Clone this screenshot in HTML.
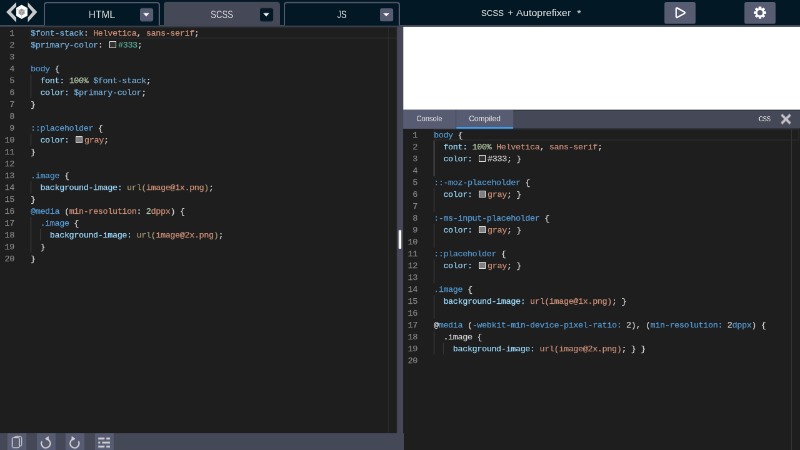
<!DOCTYPE html>
<html lang="en">
<head>
<meta charset="utf-8">
<title>SCSS + Autoprefixer</title>
<style>
*{box-sizing:border-box;margin:0;padding:0}
html,body{width:800px;height:450px;overflow:hidden;background:#03192a}
body{font-family:"Liberation Sans",sans-serif}
#app{position:absolute;left:0;top:0;width:1280px;height:720px;transform:scale(.625);transform-origin:0 0;background:#021925;overflow:hidden}
#hdr{position:absolute;left:0;top:0;width:1280px;height:43px;background:#021925;border-bottom:3px solid #454857}
.tab{position:absolute;top:3px;height:38px;width:186px;border:2px solid #565a70;border-bottom:none;border-radius:5px 5px 0 0;background:#021925;color:#e4e4e4;font-size:16px;line-height:34px;text-align:center}
.tab.act{background:#454857;border-color:#454857}
.tab span{will-change:transform;position:absolute;left:0;right:0;top:2px;text-align:center;font-size:15.9px;color:#dedede;transform:scaleX(0.975)}
.dd{position:absolute;right:9.3px;top:8px;width:21px;height:20.5px;border-radius:3px;background:#585c73}
.tab.act .dd{background:#021925}
.dd:after{content:"";position:absolute;left:5.7px;top:7.7px;border:5.3px solid transparent;border-top:5.6px solid #fff;border-bottom:none}
#title span{position:absolute;top:0;height:40px;line-height:41px;color:#e2e2e2;font-size:15.9px;transform-origin:0 50%;white-space:pre}
.hb{position:absolute;top:3px;width:50px;height:35px;border-radius:3px;background:#585c73}
.ed{position:absolute;background:#1e1e1e;overflow:hidden;font-family:"Liberation Mono",monospace;font-size:13.5px;color:#d4d4d4;letter-spacing:-0.4px;-webkit-text-stroke:0.25px}
.ln{position:relative;height:19px;line-height:19px;white-space:pre}
.ln b{position:absolute;left:0;top:0.6px;will-change:transform;width:23px;text-align:right;font-weight:normal;color:#858585}
.ln:first-child b{color:#c6c6c6}
.ln .tx{position:absolute;left:49px;top:0.6px;will-change:transform}
.cur{position:absolute;left:49px;top:0;height:19px;border:2px solid #282828}
.ov{position:absolute;top:0;left:621px;width:20px;bottom:0;border-left:1px solid #333}
.g{position:absolute;width:1px;background:#404040}.ga{background:#707070}
.cb{display:inline-block;width:11.2px;height:11.2px;border:1.4px solid #eee;margin:1.4px 2.8px 0 2.8px;vertical-align:-1px}
.v{color:#74b0df}.s{color:#ce9178}.d{color:#d4d4d4}.t{color:#569cd6}.a{color:#9cdcfe}.n{color:#b5cea8}.h{color:#5bb498}.m{color:#a79873}.k{color:#569cd6}
#gut{position:absolute;left:635px;top:43px;width:10px;height:677px;background:#454857}
#gut i{position:absolute;left:3px;top:325px;width:4px;height:30px;background:#fff;border-radius:1px}
#prev{position:absolute;left:645px;top:43px;width:635px;height:133px;background:#fff}
#rtabs{position:absolute;left:645px;top:176px;width:635px;height:30px;background:#454857;color:#e4e4e4;font-size:12px}
.rt{will-change:transform;position:absolute;top:0;height:30px;line-height:29px;text-align:center;background:#585c73}
#bot{position:absolute;left:0;top:692.6px;width:645px;height:28px;background:#454857}
.bb{position:absolute;top:0;width:30px;height:28px;background:#585c73}
svg{position:absolute;overflow:visible}
</style>
</head>
<body>
<div id="app">
 <div id="hdr">
  <svg id="logo" style="left:0;top:0" width="70" height="40" viewBox="0 0 70 40">
   <path d="M10 19.2 L25.8 3.5 L25.8 10.5 L17.5 19.2 L25.8 28 L25.8 35.5 Z" fill="#c9c9c9"/>
   <path d="M59.5 19.2 L44.5 3.5 L44.5 10.5 L52.2 19.2 L44.5 28 L44.5 35.5 Z" fill="#c9c9c9"/>
   <path d="M34.6 7.5 L44 12.8 L44 25.2 L34.6 30.5 L25.8 25.2 L25.8 12.8 Z" fill="#fff"/>
   <path d="M34.6 13.6 L39.4 16.3 L39.4 22 L34.6 24.9 L29.8 22 L29.8 16.3 Z" fill="#9c9c9c"/>
   <path d="M34.6 19.2 L39.4 16.3 M34.6 19.2 L29.8 16.3 M34.6 19.2 L34.6 29.5" stroke="#c4c4c4" stroke-width="1" fill="none"/>
   <path d="M27 14.9 L29.2 14.9 M40 14.9 L42.2 14.9" stroke="#b4b4b4" stroke-width="1" fill="none"/>
  </svg>
  <div class="tab" style="left:70px"><span>HTML</span><i class="dd"></i></div>
  <div class="tab act" style="left:262px"><span style="transform:scaleX(0.828)">SCSS</span><i class="dd"></i></div>
  <div class="tab" style="left:454px"><span style="transform:scaleX(0.790)">JS</span><i class="dd"></i></div>
  <div id="title"><span style="left:770.3px;transform:scaleX(0.828)">SCSS</span> <span style="left:811.5px;transform:scaleX(0.974)">+</span> <span style="left:826px;transform:scaleX(1.019)">Autoprefixer</span> <span style="left:922.5px;transform:scaleX(1.072)">*</span></div>
  <div class="hb" style="left:1063px">
   <svg style="left:0;top:0" width="50" height="35"><path d="M20 10.8 L31.9 17.25 L20 23.7 Z" fill="#fff" stroke="#fff" stroke-width="4.6" stroke-linejoin="round"/><path d="M20 10.8 L31.9 17.25 L20 23.7 Z" fill="#585c73"/></svg>
  </div>
  <div class="hb" style="left:1191px">
   <svg style="left:0;top:0" width="50" height="35" viewBox="0 0 50 35">
    <g transform="translate(25 17.2)" fill="#fff">
     <g id="teeth">
      <rect x="-2.1" y="-9.7" width="4.2" height="19.4" rx="1"/>
      <rect x="-2.1" y="-9.7" width="4.2" height="19.4" rx="1" transform="rotate(45)"/>
      <rect x="-2.1" y="-9.7" width="4.2" height="19.4" rx="1" transform="rotate(90)"/>
      <rect x="-2.1" y="-9.7" width="4.2" height="19.4" rx="1" transform="rotate(135)"/>
     </g>
     <circle r="7.1"/>
     <circle r="4.2" fill="#585c73"/>
    </g>
   </svg>
  </div>
 </div>

 <div class="ed" id="led" style="left:0;top:43px;width:636px;height:651px">
  <div class="cur" style="width:592px"></div>
  <u class="g" style="left:49px;top:76px;height:38px"></u><u class="g" style="left:49px;top:171px;height:19px"></u><u class="g" style="left:49px;top:247px;height:19px"></u><u class="g" style="left:49px;top:304px;height:57px"></u><u class="g" style="left:64.4px;top:323px;height:19px"></u>
  <div class="ln"><b>1</b><span class="tx"><span class="v">$font-stack</span><span class="d">: </span><span class="s">Helvetica</span><span class="d">, </span><span class="s">sans-serif</span><span class="d">;</span></span></div>
<div class="ln"><b>2</b><span class="tx"><span class="v">$primary-color</span><span class="d">: </span><i class="cb" style="background:#333"></i><span class="h">#333</span><span class="d">;</span></span></div>
<div class="ln"><b>3</b><span class="tx"></span></div>
<div class="ln"><b>4</b><span class="tx"><span class="t">body</span><span class="d"> {</span></span></div>
<div class="ln"><b>5</b><span class="tx"><span class="d">  </span><span class="a">font:</span><span class="d"> </span><span class="n">100%</span><span class="d"> </span><span class="v">$font-stack</span><span class="d">;</span></span></div>
<div class="ln"><b>6</b><span class="tx"><span class="d">  </span><span class="a">color:</span><span class="d"> </span><span class="v">$primary-color</span><span class="d">;</span></span></div>
<div class="ln"><b>7</b><span class="tx"><span class="d">}</span></span></div>
<div class="ln"><b>8</b><span class="tx"></span></div>
<div class="ln"><b>9</b><span class="tx"><span class="t">::placeholder</span><span class="d"> {</span></span></div>
<div class="ln"><b>10</b><span class="tx"><span class="d">  </span><span class="a">color:</span><span class="d"> </span><i class="cb" style="background:gray"></i><span class="s">gray</span><span class="d">;</span></span></div>
<div class="ln"><b>11</b><span class="tx"><span class="d">}</span></span></div>
<div class="ln"><b>12</b><span class="tx"></span></div>
<div class="ln"><b>13</b><span class="tx"><span class="t">.image</span><span class="d"> {</span></span></div>
<div class="ln"><b>14</b><span class="tx"><span class="d">  </span><span class="a">background-image:</span><span class="d"> </span><span class="m">url(</span><span class="s">image@1x.png</span><span class="m">)</span><span class="d">;</span></span></div>
<div class="ln"><b>15</b><span class="tx"><span class="d">}</span></span></div>
<div class="ln"><b>16</b><span class="tx"><span class="k">@media</span><span class="d"> (</span><span class="s">min-resolution</span><span class="d">: </span><span class="n">2</span><span class="s">dppx</span><span class="d">) {</span></span></div>
<div class="ln"><b>17</b><span class="tx"><span class="d">  </span><span class="t">.image</span><span class="d"> {</span></span></div>
<div class="ln"><b>18</b><span class="tx"><span class="d">    </span><span class="a">background-image:</span><span class="d"> </span><span class="m">url(</span><span class="s">image@2x.png</span><span class="m">)</span><span class="d">;</span></span></div>
<div class="ln"><b>19</b><span class="tx"><span class="d">  }</span></span></div>
<div class="ln"><b>20</b><span class="tx"><span class="d">}</span></span></div>
  <div class="ov"></div>
 </div>
 <div id="gut"><i></i></div>
 <div id="prev"></div>
 <div id="rtabs">
  <div class="rt" style="left:0;width:84px"><span style="display:block;transform:scaleX(.93)">Console</span></div>
  <div class="rt" style="left:85px;width:91px;border-bottom:3px solid #3a9ff2">Compiled</div>
  <div style="position:absolute;left:569px;top:0;line-height:29px;font-size:11.5px;transform:scaleX(.81);transform-origin:0 50%;will-change:transform;color:#ececec">CSS</div>
  <svg style="left:604px;top:6px" width="17" height="17" viewBox="0 0 17 17"><path d="M1.5 1.5 L15.5 15.5 M15.5 1.5 L1.5 15.5" stroke="#c6c6ca" stroke-width="3.8"/></svg>
 </div>
 <div class="ed" id="red" style="left:645px;top:206px;width:635px;height:514px">
  <div class="cur" style="width:584.5px"></div>
  <u class="g ga" style="left:49px;top:19px;height:57px"></u><u class="g" style="left:49px;top:95px;height:38px"></u><u class="g" style="left:49px;top:152px;height:38px"></u><u class="g" style="left:49px;top:209px;height:38px"></u><u class="g" style="left:49px;top:266px;height:38px"></u><u class="g" style="left:49px;top:323px;height:38px"></u><u class="g" style="left:64.4px;top:342px;height:19px"></u>
  <div class="ln"><b>1</b><span class="tx"><span class="t">body</span><span class="d"> {</span></span></div>
<div class="ln"><b>2</b><span class="tx"><span class="d">  </span><span class="a">font:</span><span class="d"> </span><span class="n">100%</span><span class="d"> </span><span class="s">Helvetica</span><span class="d">, </span><span class="s">sans-serif</span><span class="d">;</span></span></div>
<div class="ln"><b>3</b><span class="tx"><span class="d">  </span><span class="a">color:</span><span class="d"> </span><i class="cb" style="background:#333"></i><span class="d">#333; }</span></span></div>
<div class="ln"><b>4</b><span class="tx"></span></div>
<div class="ln"><b>5</b><span class="tx"><span class="t">::-moz-placeholder</span><span class="d"> {</span></span></div>
<div class="ln"><b>6</b><span class="tx"><span class="d">  </span><span class="a">color:</span><span class="d"> </span><i class="cb" style="background:gray"></i><span class="s">gray</span><span class="d">; }</span></span></div>
<div class="ln"><b>7</b><span class="tx"></span></div>
<div class="ln"><b>8</b><span class="tx"><span class="t">:-ms-input-placeholder</span><span class="d"> {</span></span></div>
<div class="ln"><b>9</b><span class="tx"><span class="d">  </span><span class="a">color:</span><span class="d"> </span><i class="cb" style="background:gray"></i><span class="s">gray</span><span class="d">; }</span></span></div>
<div class="ln"><b>10</b><span class="tx"></span></div>
<div class="ln"><b>11</b><span class="tx"><span class="t">::placeholder</span><span class="d"> {</span></span></div>
<div class="ln"><b>12</b><span class="tx"><span class="d">  </span><span class="a">color:</span><span class="d"> </span><i class="cb" style="background:gray"></i><span class="s">gray</span><span class="d">; }</span></span></div>
<div class="ln"><b>13</b><span class="tx"></span></div>
<div class="ln"><b>14</b><span class="tx"><span class="t">.image</span><span class="d"> {</span></span></div>
<div class="ln"><b>15</b><span class="tx"><span class="d">  </span><span class="a">background-image:</span><span class="d"> </span><span class="s">url(image@1x.png)</span><span class="d">; }</span></span></div>
<div class="ln"><b>16</b><span class="tx"></span></div>
<div class="ln"><b>17</b><span class="tx"><span class="d">@</span><span class="k">media</span><span class="d"> (</span><span class="t">-webkit-min-device-pixel-ratio:</span><span class="d"> 2), (</span><span class="t">min-resolution:</span><span class="d"> 2</span><span class="t">dppx</span><span class="d">) {</span></span></div>
<div class="ln"><b>18</b><span class="tx"><span class="d">  .image {</span></span></div>
<div class="ln"><b>19</b><span class="tx"><span class="d">    </span><span class="a">background-image:</span><span class="d"> </span><span class="s">url(image@2x.png)</span><span class="d">; } }</span></span></div>
<div class="ln"><b>20</b><span class="tx"></span></div>
  <div class="ov"></div>
 </div>
 <div id="bot">
  <div class="bb" style="left:12px"><svg style="left:0;top:0" width="30" height="28"><path d="M10.5 7 L13.6 5.4 L20.5 5.4 Q22.6 5.4 22.6 7.5 L22.6 19 Q22.6 20.6 20.6 20.6 L19 20.6" fill="none" stroke="#d2d2d2" stroke-width="1.5"/><rect x="7.6" y="7.1" width="11.4" height="16.3" rx="2" fill="none" stroke="#d2d2d2" stroke-width="1.5"/></svg></div>
  <div class="bb" style="left:58.5px"><svg style="left:0;top:0" width="30" height="28"><path d="M14.3 9.3 A7.2 7.2 0 1 1 8.06 12.9" fill="none" stroke="#d2d2d2" stroke-width="2.2"/><path d="M13 8.9 L19 4.6 L19.3 12.8 Z" fill="#d2d2d2"/></svg></div>
  <div class="bb" style="left:105px"><svg style="left:0;top:0" width="30" height="28"><path d="M14.3 9.3 A7.2 7.2 0 1 0 20.54 12.9" fill="none" stroke="#d2d2d2" stroke-width="2.2"/><path d="M15.6 8.9 L9.6 4.6 L9.3 12.8 Z" fill="#d2d2d2"/></svg></div>
  <div class="bb" style="left:151.5px"><svg style="left:0;top:0" width="30" height="28" fill="#d4d4d4"><rect x="5.2" y="7.3" width="10" height="2.9"/><rect x="18" y="7.3" width="6" height="2.9"/><rect x="5.2" y="13.8" width="3.2" height="2.9"/><rect x="11.5" y="13.8" width="12.5" height="2.9"/><rect x="5.2" y="20.2" width="10" height="2.9"/><rect x="18" y="20.2" width="6" height="2.9"/></svg></div>
 </div>
</div>
</body>
</html>
